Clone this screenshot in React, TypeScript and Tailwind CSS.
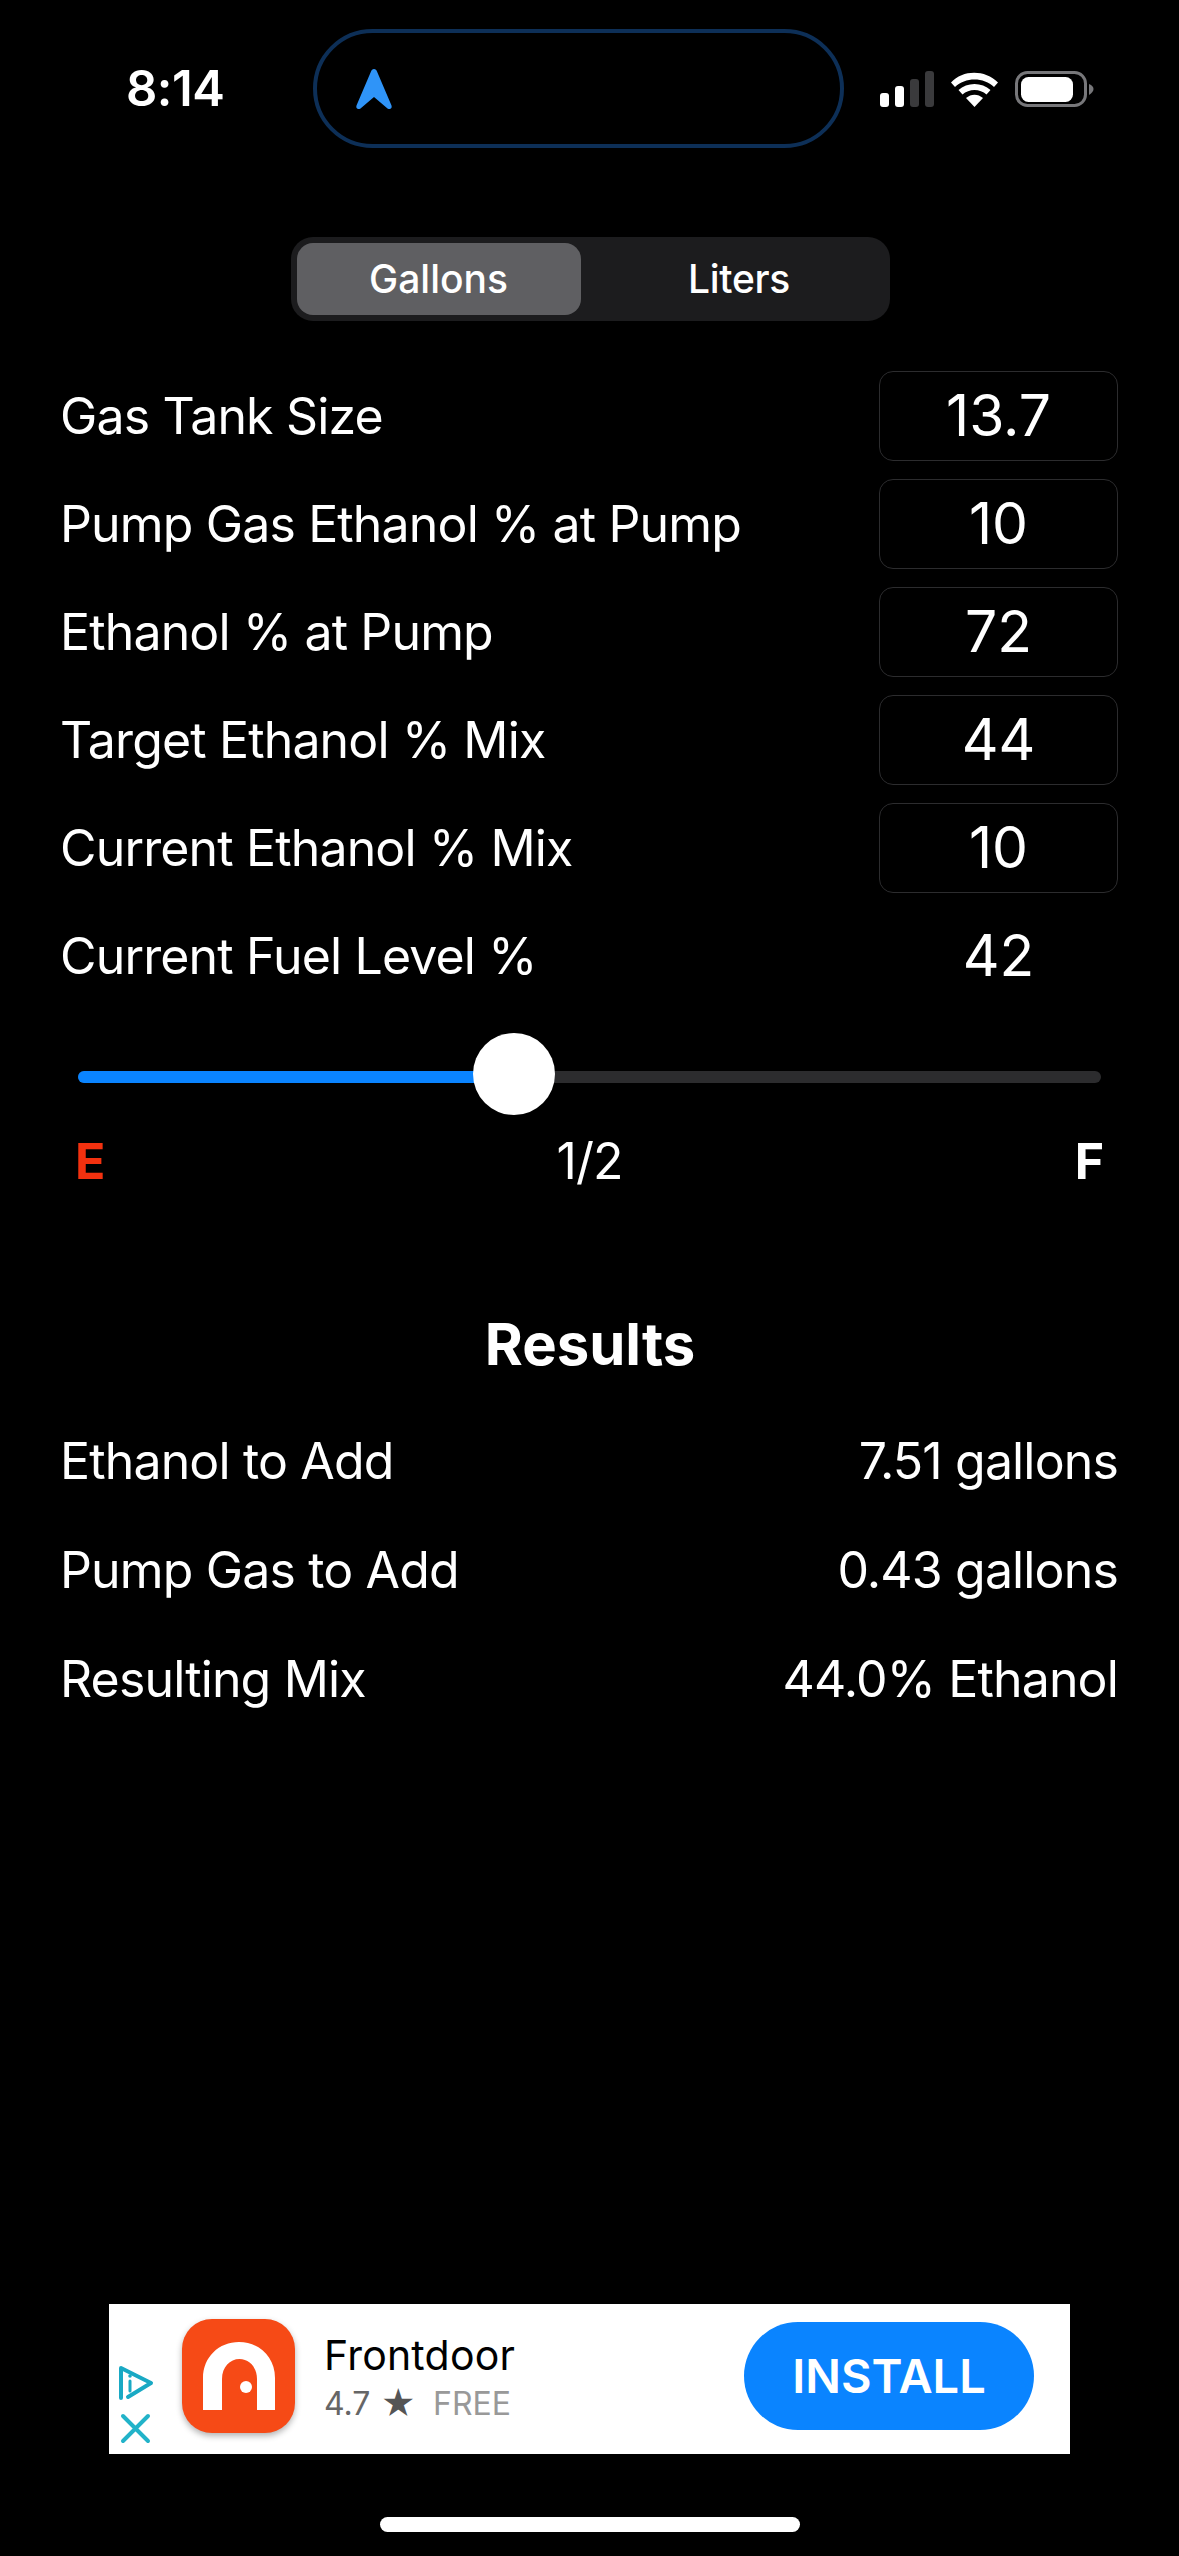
const fieldRows = [
  { label: 'Gas Tank Size', value: '13.7' },
  { label: 'Pump Gas Ethanol % at Pump', value: '10' },
  { label: 'Ethanol % at Pump', value: '72' },
  { label: 'Target Ethanol % Mix', value: '44' },
  { label: 'Current Ethanol % Mix', value: '10' },
];

const resultRows = [
  { label: 'Ethanol to Add', value: '7.51 gallons' },
  { label: 'Pump Gas to Add', value: '0.43 gallons' },
  { label: 'Resulting Mix', value: '44.0% Ethanol' },
];

function StatusIcons() {
  return (
    <svg width="214" height="37" viewBox="0 0 214 37" className="block">
      {/* signal */}
      <rect x="0" y="22" width="9" height="14" rx="3" fill="#fff" />
      <rect x="15" y="15" width="9" height="21" rx="3" fill="#fff" />
      <rect x="30" y="8" width="9" height="28" rx="3" fill="#3a3a3c" />
      <rect x="45" y="0" width="9" height="36" rx="3" fill="#3a3a3c" />
      {/* wifi */}
      <path d="M71 11.5 C83 -1.5 105 -1.5 118 11.5 L114 16 C104 6 85 6 75 16 Z" fill="#fff" />
      <path d="M78.5 19 C87 11 102 11 110.5 19 L106.5 23.5 C100 17.5 89 17.5 82.5 23.5 Z" fill="#fff" />
      <path d="M86 27 C91 22.5 98 22.5 103 27 L94.5 36 Z" fill="#fff" />
      {/* battery */}
      <rect x="136.5" y="1.5" width="69" height="33" rx="11" fill="none" stroke="#77777a" strokeWidth="3" />
      <rect x="141" y="6" width="52" height="25" rx="7.5" fill="#fff" />
      <path d="M209 13 C212 14 213.5 16 213.5 18 C213.5 20 212 22 209 24 Z" fill="#77777a" />
    </svg>
  );
}

function AppBadge() {
  return (
    <svg width="113" height="114" viewBox="0 0 113 114" className="block">
      <path
        d="M21 91 V59 C21 38 37 23 57 23 C77 23 93 38 93 59 V91 H75 V60 C75 48 67 40 57.5 40 C48 40 40 48 40 60 V91 Z"
        fill="#fff"
      />
      <circle cx="64" cy="68" r="6" fill="#fff" />
    </svg>
  );
}

function AdChoices() {
  return (
    <svg width="40" height="80" viewBox="0 0 40 80" className="block">
      <path
        d="M5 34 V4 L35 19 L12 33"
        fill="none"
        stroke="#19a9c4"
        strokeWidth="4"
        strokeLinecap="round"
        strokeLinejoin="round"
      />
      <path d="M14 17 V27" stroke="#19a9c4" strokeWidth="3" strokeLinecap="round" />
      <circle cx="14" cy="12" r="1.8" fill="#19a9c4" />
      <path d="M7 52 L32 77 M32 52 L7 77" stroke="#22b3c9" strokeWidth="4" strokeLinecap="round" />
    </svg>
  );
}

export default function App() {
  return (
    <div className="w-[1179px] h-[2556px] bg-black text-white flex flex-col font-['Inter','Liberation_Sans',sans-serif]">
      {/* Status bar */}
      <div className="flex items-center pt-[29px] pl-[126px]">
        <span className="w-[187px] text-[49px] leading-none font-semibold tracking-[-0.5px]">8:14</span>
        <div className="w-[531px] h-[119px] rounded-[60px] border-[4px] border-[#0d2f57] bg-black flex items-center pl-[38px]">
          <svg width="38" height="42" viewBox="0 0 38 42" className="block">
            <path
              d="M19 1 C20.5 1 21.5 2 22 3.5 L36.5 37.5 C37.5 40.5 35 42 32.5 40.5 L19 29 L5.5 40.5 C3 42 0.5 40.5 1.5 37.5 L16 3.5 C16.5 2 17.5 1 19 1 Z"
              fill="#2f94f8"
            />
          </svg>
        </div>
        <div className="ml-[36px] mt-[1px]">
          <StatusIcons />
        </div>
      </div>

      {/* Units */}
      <div className="self-center mt-[89px] ml-[1px] w-[599px] h-[84px] rounded-[22px] bg-[#1c1c1e] p-[6px] flex">
        <div className="w-[284px] rounded-[16px] bg-[#5f5f62] flex items-center justify-center text-[39px] font-medium">
          Gallons
        </div>
        <div className="flex-1 pl-[14px] flex items-center justify-center text-[39px] font-medium tracking-[-0.3px]">Liters</div>
      </div>

      {/* Inputs */}
      <div className="mt-[50px] pl-[60px] pr-[61px] flex flex-col gap-[18px]">
        {fieldRows.map((row) => (
          <div key={row.label} className="h-[90px] flex items-center justify-between">
            <span className="text-[50px] tracking-[-0.85px]">{row.label}</span>
            <div className="w-[239px] h-[90px] rounded-[14px] border border-[#2c2c2e] flex items-center justify-center text-[57px]">
              {row.value}
            </div>
          </div>
        ))}
        <div className="h-[90px] flex items-center justify-between">
          <span className="text-[50px] tracking-[-0.85px]">Current Fuel Level %</span>
          <div className="w-[239px] text-center text-[57px]">42</div>
        </div>
      </div>

      {/* Fuel slider */}
      <div className="relative mt-[32px] mx-[78px] h-[82px] flex items-center">
        <div className="mt-[6px] w-full h-[12px] rounded-full bg-[#2c2c2e] overflow-hidden">
          <div className="w-[420px] h-full bg-[#0a84ff]" />
        </div>
        <div className="absolute left-[395px] top-0 w-[82px] h-[82px] rounded-full bg-white" />
      </div>
      <div className="mt-[9px] mx-[75px] grid grid-cols-3 items-center h-[60px] text-[50px]">
        <span className="font-bold text-[#f3310f]">E</span>
        <span className="text-center tracking-[-1px]">1/2</span>
        <span className="text-right font-bold">F</span>
      </div>

      {/* Results */}
      <h2 className="mt-[125px] ml-[1px] text-center text-[58px] leading-[70px] font-bold">Results</h2>
      <div className="mt-[52px] pl-[60px] pr-[61px] flex flex-col gap-[49px]">
        {resultRows.map((row) => (
          <div key={row.label} className="h-[60px] flex items-center justify-between text-[50px] tracking-[-0.85px]">
            <span>{row.label}</span>
            <span>{row.value}</span>
          </div>
        ))}
      </div>

      {/* Ad banner */}
      <div className="mt-auto mx-[109px] h-[150px] bg-white text-black flex items-center">
        <div className="w-[73px] self-start pl-[7px] pt-[60px]">
          <AdChoices />
        </div>
        <div className="self-start mt-[15px] w-[113px] h-[114px] rounded-[30px] bg-[#f64a16] shadow-[0_3px_6px_rgba(0,0,0,0.3)]">
          <AppBadge />
        </div>
        <div className="ml-[29px] mb-[6px] flex flex-col">
          <span className="text-[41px] leading-[50px] tracking-[0.2px]">Frontdoor</span>
          <div className="mt-[6px] flex items-center text-[32px] leading-[36px] text-[#666]">
            <span>4.7</span>
            <span className="ml-[10px] text-[34px] leading-none text-[#555]">★</span>
            <span className="ml-[17px] text-[#999]">FREE</span>
          </div>
        </div>
        <div className="ml-auto mr-[36px] mb-[6px] w-[290px] h-[108px] rounded-full bg-[#0a84ff] text-white flex items-center justify-center text-[47px] font-semibold">
          INSTALL
        </div>
      </div>

      {/* Home indicator */}
      <div className="self-center mt-[63px] mb-[24px] w-[420px] h-[15px] rounded-full bg-white" />
    </div>
  );
}
